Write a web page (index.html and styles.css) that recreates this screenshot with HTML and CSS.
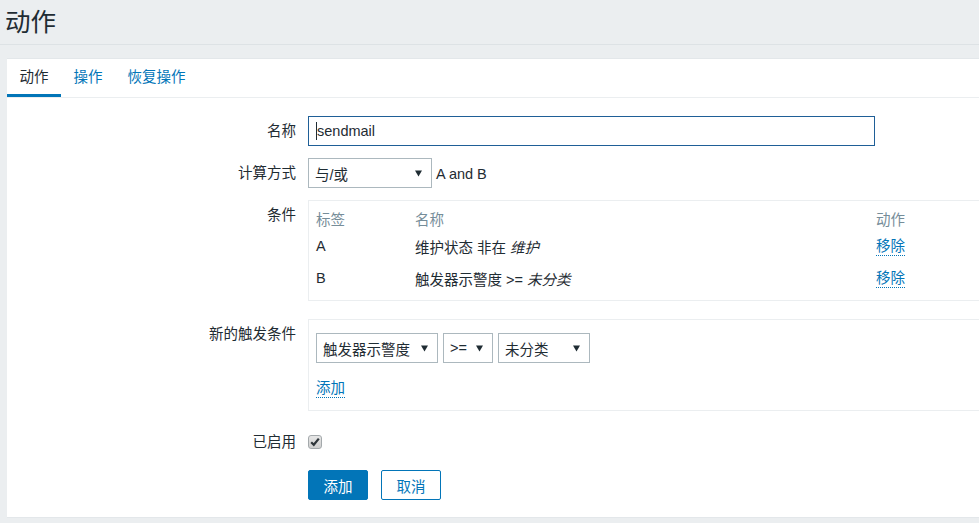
FILE: index.html
```html
<!DOCTYPE html>
<html lang="zh">
<head>
<meta charset="utf-8">
<title>动作</title>
<link rel="stylesheet" href="styles.css">
</head>
<body>
<header class="page-header">
  <h1 class="page-title">动作</h1>
</header>
<main class="panel">
  <nav class="tabs">
    <a class="tab tab-active">动作</a>
    <a class="tab">操作</a>
    <a class="tab">恢复操作</a>
  </nav>
  <form class="form">
    <div class="row row-name">
      <label class="label">名称</label>
      <div class="field">
        <div class="text-input"><span class="caret"></span>sendmail</div>
      </div>
    </div>
    <div class="row row-calc">
      <label class="label">计算方式</label>
      <div class="field field-inline">
        <div class="select select-calc"><span>与/或</span><svg class="arrow" width="7" height="7" viewBox="0 0 7 7"><polygon points="0,0.5 7,0.5 3.5,6.5"/></svg></div>
        <span class="formula">A and B</span>
      </div>
    </div>
    <div class="row row-cond">
      <label class="label">条件</label>
      <div class="field">
        <div class="box cond-box">
          <div class="cond-row cond-head">
            <span>标签</span><span>名称</span><span>动作</span>
          </div>
          <div class="cond-row">
            <span>A</span><span>维护状态 非在 <em>维护</em></span><span><a class="link">移除</a></span>
          </div>
          <div class="cond-row cond-row-b">
            <span>B</span><span>触发器示警度 &gt;= <em>未分类</em></span><span><a class="link">移除</a></span>
          </div>
        </div>
      </div>
    </div>
    <div class="row row-new">
      <label class="label">新的触发条件</label>
      <div class="field">
        <div class="box new-box">
          <div class="select-line">
            <div class="select select-type"><span>触发器示警度</span><svg class="arrow" width="7" height="7" viewBox="0 0 7 7"><polygon points="0,0.5 7,0.5 3.5,6.5"/></svg></div>
            <div class="select select-op"><span>&gt;=</span><svg class="arrow" width="7" height="7" viewBox="0 0 7 7"><polygon points="0,0.5 7,0.5 3.5,6.5"/></svg></div>
            <div class="select select-sev"><span>未分类</span><svg class="arrow" width="7" height="7" viewBox="0 0 7 7"><polygon points="0,0.5 7,0.5 3.5,6.5"/></svg></div>
          </div>
          <div class="add-line"><a class="link">添加</a></div>
        </div>
      </div>
    </div>
    <div class="row row-enabled">
      <label class="label">已启用</label>
      <div class="field field-inline">
        <span class="checkbox"><svg width="12" height="12" viewBox="0 0 12 12"><path d="M2.2 6.2 L4.8 8.8 L9.8 2.6" fill="none" stroke="#2f363b" stroke-width="2.2"/></svg></span>
      </div>
    </div>
    <div class="row row-buttons">
      <span></span>
      <div class="field field-inline buttons">
        <button type="button" class="btn btn-primary">添加</button>
        <button type="button" class="btn btn-alt">取消</button>
      </div>
    </div>
  </form>
</main>
</body>
</html>
```
FILE: styles.css
```css
html, body {
  margin: 0;
  padding: 0;
  overflow: hidden;
}
body {
  background: #ebeef0;
  color: #1f2c33;
  font-family: "Liberation Sans", "Noto Sans CJK SC", sans-serif;
  font-size: 14.5px;
  width: 979px;
  height: 523px;
}
.page-header {
  height: 44px;
  border-bottom: 1px solid #dde2e5;
  padding-left: 5px;
}
.page-title {
  margin: 0;
  font-size: 25.5px;
  font-weight: normal;
  line-height: 45px;
}
.panel {
  display: block;
  margin: 13px 0 0 7px;
  width: 972px;
  background: #fff;
  border-top: 1px solid #e3e7ea;
  border-bottom: 1px solid #e3e7ea;
}
.tabs {
  display: flex;
  border-bottom: 1px solid #ebeef0;
}
.tab {
  padding: 2px 12.5px 0;
  line-height: 33px;
  border-bottom: 3px solid transparent;
  color: #0275b8;
}
.tab-active {
  color: #1f2c33;
  border-bottom-color: #0275b8;
}
.form {
  display: flex;
  flex-direction: column;
  padding: 18px 0 17px;
}
.row {
  display: grid;
  grid-template-columns: 289px 1fr;
  column-gap: 12px;
  align-items: start;
}
.row-calc { margin-top: 12px; }
.row-cond { margin-top: 12px; }
.row-new { margin-top: 18px; }
.row-enabled { margin-top: 16px; }
.row-buttons { margin-top: 13px; }
.label {
  text-align: right;
  line-height: 30px;
}
.field-inline {
  display: flex;
  align-items: center;
  height: 30px;
}
.text-input {
  box-sizing: border-box;
  width: 567px;
  height: 30px;
  border: 1px solid #1f5f97;
  padding-left: 7px;
  line-height: 28px;
  display: flex;
  align-items: center;
}
.caret {
  display: inline-block;
  width: 1px;
  height: 18px;
  background: #1f2c33;
}
.select {
  box-sizing: border-box;
  height: 30px;
  border: 1px solid #acb8be;
  padding: 0 9px 0 6px;
  display: flex;
  align-items: center;
  justify-content: space-between;
  background: #fff;
}
.arrow polygon { fill: #1f2c33; }
.select-calc { width: 124px; }
.formula { margin-left: 4px; padding-top: 1px; }
.box {
  box-sizing: border-box;
  border: 1px solid #ebeef0;
  border-right: none;
}
.cond-box {
  height: 101px;
  padding: 4px 7px 0;
}
.cond-row {
  display: grid;
  grid-template-columns: 99px 461px 1fr;
  align-items: center;
  height: 30px;
}
.cond-head {
  height: 26px;
  color: #768d99;
}
.cond-row-b { margin-top: 2px; }
em { font-style: italic; }
.link {
  display: inline-block;
  color: #0275b8;
  line-height: 18px;
  border-bottom: 1px dotted #0275b8;
}
.new-box {
  height: 92px;
  padding: 13px 7px 0;
}
.select-line {
  display: flex;
  gap: 5px;
}
.select-type { width: 122px; }
.select-op { width: 50px; }
.select-sev { width: 92px; }
.add-line { margin-top: 16px; }
.checkbox {
  box-sizing: border-box;
  width: 14px;
  height: 14px;
  border: 1px solid #a4a9ac;
  border-radius: 3px;
  background: linear-gradient(#e6e6e6, #cfcfcf);
  display: flex;
  align-items: center;
  justify-content: center;
}
.buttons { gap: 13px; }
.btn {
  box-sizing: border-box;
  width: 60px;
  height: 30px;
  border-radius: 2px;
  font-family: inherit;
  font-size: 14.5px;
  padding: 0;
  cursor: pointer;
}
.btn-primary {
  background: #0275b8;
  border: 1px solid #0275b8;
  color: #fff;
}
.btn-alt {
  background: #fff;
  border: 1px solid #0275b8;
  color: #0275b8;
}
```
